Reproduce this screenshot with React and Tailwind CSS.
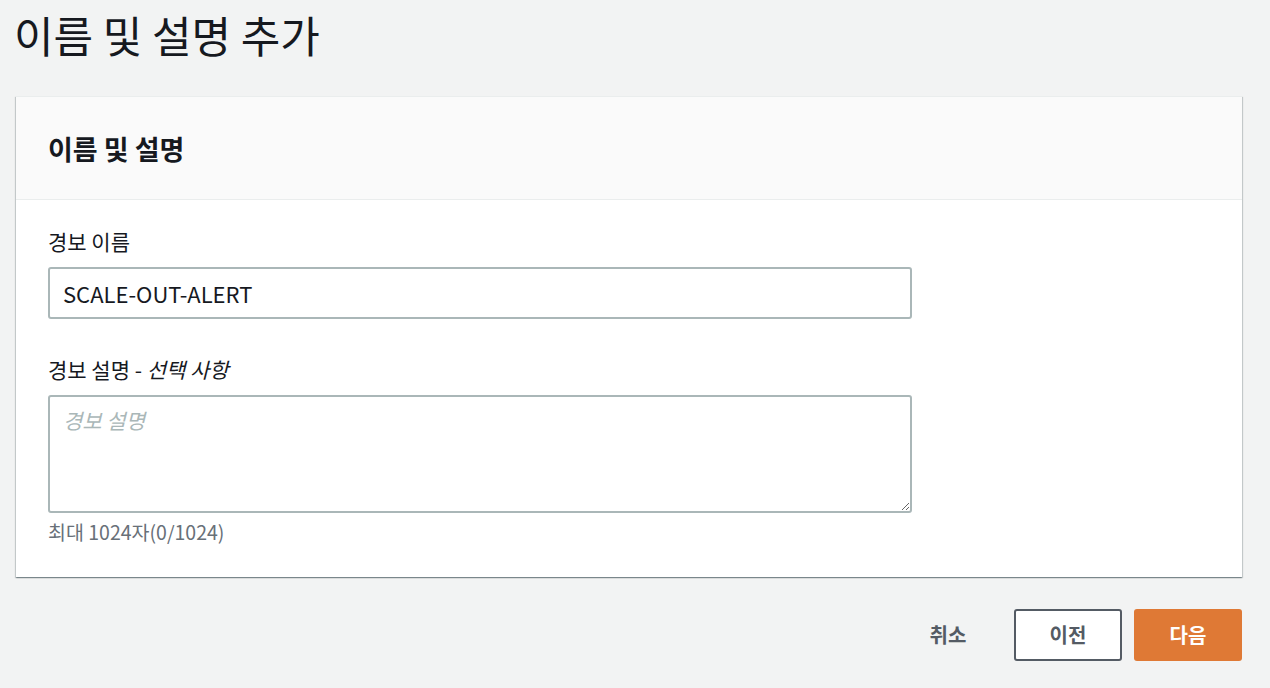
import React from 'react'

const font = { fontFamily: '"Noto Sans CJK KR", "Noto Sans", sans-serif' }

const AlarmNameForm = () => {
  return (
    <div style={font} className="min-h-[688px] w-full bg-[#f2f3f3] text-[#16191f]">
      {/* 페이지 제목 */}
      <h1 className="pl-[14px] pt-[8px] text-[43px] leading-[52px] font-normal">이름 및 설명 추가</h1>

      {/* 카드 */}
      <div className="mt-[36px] ml-4 w-[1226px] bg-white border-t border-[#eaeded] shadow-[0_1px_1px_0_rgba(0,28,36,0.3),1px_1px_1px_0_rgba(0,28,36,0.15),-1px_1px_1px_0_rgba(0,28,36,0.15)]">
        <div className="h-[103px] flex items-center px-8 bg-[#fafafa] border-b border-[#eaeded]">
          <h2 className="text-[27px] font-bold leading-none">이름 및 설명</h2>
        </div>

        <div className="px-8 pt-[28px] pb-[33px]">
          <label className="block text-[21px] leading-[26px]">경보 이름</label>
          <input
            type="text"
            defaultValue="SCALE-OUT-ALERT"
            className="mt-[13px] block w-[864px] h-[52px] px-[13px] border-2 border-[#aab7b8] rounded-[3px] text-[22px] text-[#16191f] outline-none"
          />

          <label className="block mt-[37px] text-[21px] leading-[26px]">
            경보 설명 - <i>선택 사항</i>
          </label>
          <textarea
            placeholder="경보 설명"
            className="mt-[13px] block w-[864px] h-[118px] px-[13px] py-[8px] border-2 border-[#aab7b8] rounded-[3px] text-[21px] outline-none placeholder:italic placeholder:text-[#aab7b8]"
          />
          <p className="mt-[7px] text-[19.5px] leading-[24px] text-[#687078]">최대 1024자(0/1024)</p>
        </div>
      </div>

      {/* 하단 버튼 */}
      <div className="mt-8 w-[1242px] flex justify-end gap-3">
        <button className="w-[108px] h-[52px] text-[20px] font-bold text-[#545b64]">취소</button>
        <button className="w-[108px] h-[52px] text-[20px] font-bold text-[#545b64] bg-white border-2 border-[#545b64] rounded-[3px]">
          이전
        </button>
        <button className="w-[108px] h-[52px] text-[20px] font-bold text-white bg-[#df7935] rounded-[3px]">
          다음
        </button>
      </div>
    </div>
  )
}

export default function App() {
  return <AlarmNameForm />
}
